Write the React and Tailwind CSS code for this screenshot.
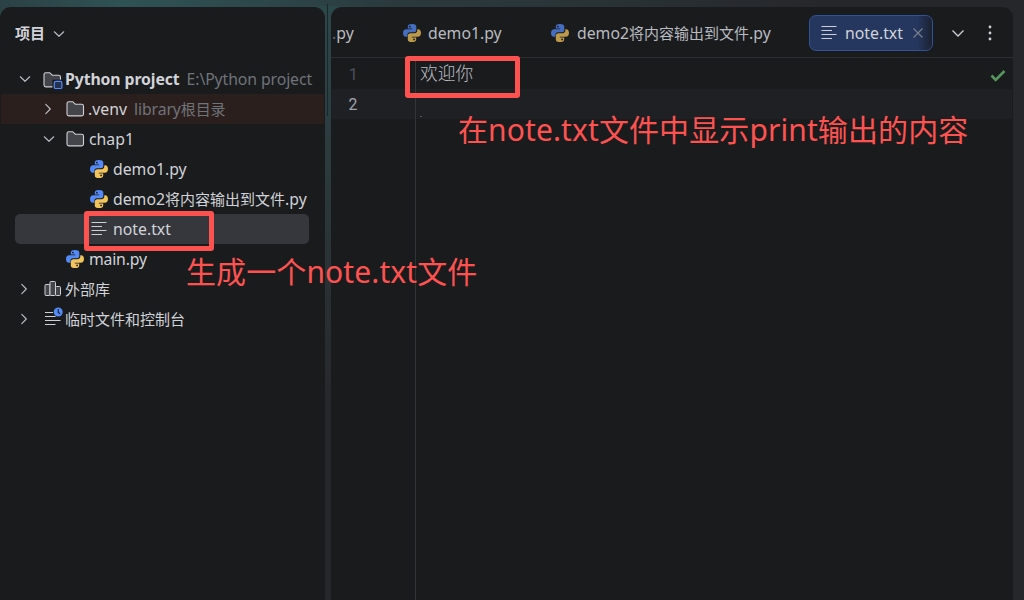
import React from 'react';
import clsx from 'clsx';

const PythonIcon = ({ className = '' }) => (
    <svg viewBox="0 0 18 18" className={clsx('h-[18px] w-[18px] shrink-0', className)}>
        <path
            fill="#548af7"
            d="M9 0C6.4 0 4.8.7 4.8 2.6V4.500H9.200V5.300H3.200C1.200 5.300 0 6.700 0 9c0 2.300 1.100 3.800 2.900 3.800H4.400V10.800C4.400 9.200 5.500 8.200 7 8.200h4C12.400 8.200 13.300 7.200 13.300 5.900V2.600C13.300.8 11.500 0 9 0ZM6.900 1.700a.9.9 0 1 1 0 1.800.9.9 0 0 1 0-1.800Z"
        />
        <path
            fill="#f2c55c"
            d="M9 18c2.600 0 4.200-.7 4.200-2.600V13.500H8.800V12.700H14.800C16.800 12.700 18 11.300 18 9c0-2.300-1.100-3.800-2.900-3.800H14.300V6.500C14.300 8.200 13 9.300 11.400 9.300H7.400C5.900 9.300 4.800 10.300 4.800 11.700V15.400C4.800 17.200 6.500 18 9 18ZM11.100 16.300a.9.9 0 1 1 0-1.800.9.9 0 0 1 0 1.800Z"
        />
    </svg>
);

const TextIcon = ({ className = '' }) => (
    <svg viewBox="0 0 18 18" className={clsx('h-[18px] w-[18px] shrink-0', className)}>
        <path fill="none" stroke="#ced0d6" strokeWidth="1.1" d="M1.500 2.500h15M1.500 6.500h10.500M1.500 10.500h15M1.500 14.500h10.500" />
    </svg>
);

const FolderIcon = ({ module = false }) => (
    <svg viewBox="0 0 20 18" className="h-[18px] w-[20px] shrink-0">
        <path
            d="M1 3.500C1 2.400 1.700 1.700 2.800 1.700H6.700L9.300 4.200H15.600C16.800 4.200 17.500 4.900 17.500 6.100V14C17.500 15.200 16.800 15.900 15.600 15.900H2.900C1.700 15.900 1 15.200 1 14Z"
            fill="#43454a"
            stroke="#ced0d6"
            strokeWidth="1.100"
        />
        {module && (
            <>
                <rect x="9.500" y="8.700" width="10.500" height="9.300" fill="#1a1b1d" />
                <rect x="11.300" y="10.300" width="7.600" height="7.400" rx="1.800" fill="#25324d" stroke="#548af7" strokeWidth="1.200" />
            </>
        )}
    </svg>
);

const LibraryIcon = () => (
    <svg viewBox="0 0 18 18" className="h-[18px] w-[18px] shrink-0">
        <g fill="#43454a" stroke="#ced0d6" strokeWidth="1">
            <rect x="1" y="4.500" width="5" height="11" rx="1" />
            <rect x="6" y="1.500" width="5.500" height="14" rx="1" />
            <rect x="11.500" y="6.500" width="5" height="9" rx="1" />
        </g>
    </svg>
);

const ScratchIcon = () => (
    <svg viewBox="0 0 20 20" className="h-5 w-5 shrink-0">
        <path fill="none" stroke="#ced0d6" strokeWidth="1.100" d="M1 5.500h8M1 9.500h10.500M1 13.500h15.500M1 17.500h10.500" />
        <circle cx="14.200" cy="5" r="4.500" fill="#548af7" />
        <path fill="none" stroke="#1a1b1d" strokeWidth="1.100" d="M14.200 2v3.200l1.900 1.600" />
    </svg>
);

const Chevron = ({ open = false, className = '' }) => (
    <svg viewBox="0 0 12 12" className={clsx('h-3 w-3 shrink-0', className)}>
        <path fill="none" stroke="#b4b8bf" strokeWidth="1.200" strokeLinecap="round" strokeLinejoin="round" d={open ? 'M1.300 3.800 6 8.300l4.700-4.500' : 'M3.800 1.300 8.300 6l-4.500 4.700'} />
    </svg>
);

// CJK glyphs sit slightly smaller than the latin ones
const Cjk = ({ children }) => <span className="text-[15px]">{children}</span>;

const TreeRow = ({ className = '', children }) => (
    <div className={clsx('flex h-[30px] items-center whitespace-nowrap', className)}>{children}</div>
);

const Label = ({ className = '', children }) => <span className={clsx('pt-[2px]', className)}>{children}</span>;

function ProjectPanel() {
    return (
        <aside className="w-[325px] shrink-0 rounded-t-[11px] bg-[#1a1b1d] text-[15.8px] text-[#d1d3d9]">
            <div className="flex h-[57px] items-center pb-1 pl-[15px]">
                <span className="text-[15px] font-bold">项目</span>
                <Chevron open className="ml-2" />
            </div>

            <TreeRow className="pl-[19px]">
                <Chevron open />
                <span className="ml-3 flex pt-px"><FolderIcon module /></span>
                <Label className="ml-[2px] font-bold tracking-[-0.1px]">Python project</Label>
                <Label className="ml-[7px] tracking-[-0.1px] text-[#6f737a]">E:\Python project</Label>
            </TreeRow>
            <TreeRow className="mx-px bg-[#2b1f1d] pl-[41px]">
                <Chevron />
                <span className="ml-3 flex"><FolderIcon /></span>
                <Label className="ml-[2px]">.venv</Label>
                <Label className="ml-[7px] tracking-[-0.1px] text-[#6f737a]">library<Cjk>根目录</Cjk></Label>
            </TreeRow>
            <TreeRow className="pl-[43px]">
                <Chevron open />
                <span className="ml-[11px] flex"><FolderIcon /></span>
                <Label className="ml-[3px]">chap1</Label>
            </TreeRow>
            <TreeRow className="pl-[90px]">
                <PythonIcon />
                <Label className="ml-[5px]">demo1.py</Label>
            </TreeRow>
            <TreeRow className="pl-[90px]">
                <PythonIcon />
                <Label className="ml-[5px]">demo2<Cjk>将内容输出到文件</Cjk>.py</Label>
            </TreeRow>
            <TreeRow className="ml-[15px] mr-4 rounded-[5px] bg-[#36373d] pl-[75px]">
                <TextIcon />
                <Label className="ml-[5px]">note.txt</Label>
            </TreeRow>
            <TreeRow className="pl-[66px]">
                <PythonIcon />
                <Label className="ml-[5px] tracking-[-0.2px]">main.py</Label>
            </TreeRow>
            <TreeRow className="pl-[18px]">
                <Chevron />
                <span className="ml-[14px] flex"><LibraryIcon /></span>
                <span className="ml-[3px] text-[15px]">外部库</span>
            </TreeRow>
            <TreeRow className="pl-[18px]">
                <Chevron />
                <span className="ml-[14px] flex pb-1"><ScratchIcon /></span>
                <span className="ml-px text-[15px]">临时文件和控制台</span>
            </TreeRow>
        </aside>
    );
}

function Tabs() {
    return (
        <div className="flex h-[51px] items-center overflow-hidden whitespace-nowrap border-b border-[#2b2d31] pt-[2px] text-[15.8px] text-[#b9bbc1]">
            <span className="w-[72px] pl-px pt-[2px]"><span className="text-[#65676b]">.</span>py</span>
            <div className="flex w-[148px] items-center">
                <PythonIcon className="opacity-75" />
                <Label className="ml-[7px]">demo1.py</Label>
            </div>
            <div className="flex w-[258px] items-center">
                <PythonIcon className="opacity-75" />
                <Label className="ml-2">demo2<Cjk>将内容输出到文件</Cjk>.py</Label>
            </div>
            <div className="flex h-[36px] w-[124px] items-center rounded-[7px] border border-[#315296] bg-gradient-to-r from-[#25375f] from-88% to-[#1b2130] pl-[10px] text-[#d1d3d9]">
                <TextIcon />
                <Label className="ml-[7px]">note.txt</Label>
                <svg viewBox="0 0 10 10" className="ml-[10px] h-[10px] w-[10px]">
                    <path stroke="#7b808b" strokeWidth="1.100" d="m.5.5 9 9m0-9-9 9" />
                </svg>
            </div>
            <svg viewBox="0 0 14 14" className="ml-[18px] h-[14px] w-[14px]">
                <path fill="none" stroke="#ced0d6" strokeWidth="1.300" d="m1.500 4.500 5.500 5.500 5.500-5.500" />
            </svg>
            <svg viewBox="0 0 4 18" className="ml-[23px] h-[18px] w-1" fill="#ced0d6">
                <circle cx="2" cy="3" r="1.400" />
                <circle cx="2" cy="9" r="1.400" />
                <circle cx="2" cy="15" r="1.400" />
            </svg>
        </div>
    );
}

function Editor() {
    return (
        <main className="flex w-[682px] shrink-0 flex-col rounded-t-[11px] bg-[#1a1b1d]">
            <Tabs />
            <div className="relative flex-1">
                <div className="flex h-[31px] items-center">
                    <span className="w-[27px] text-right font-['Roboto_Mono','DejaVu_Sans_Mono',monospace] text-[16px] text-[#4b5059]">1</span>
                    <span className="ml-[62px] pb-[2px] font-['Noto_Sans_CJK_SC',sans-serif] text-[17.7px] font-light text-[#bcbec4]">欢迎你</span>
                    <svg viewBox="0 0 16 12" className="ml-auto mr-[7px] mt-[4px] h-3 w-4">
                        <path fill="none" stroke="#57965c" strokeWidth="2.600" d="m1.500 5.500 4.200 4.300L14.500 1" />
                    </svg>
                </div>
                <div className="mr-px flex h-[30px] items-center bg-[#1f2024]">
                    <span className="w-[27px] text-right font-['Roboto_Mono','DejaVu_Sans_Mono',monospace] text-[16px] text-[#a1a3ab]">2</span>
                </div>
                <div className="absolute inset-y-0 left-[84px] w-px bg-[#313438]" />
                <div className="absolute left-[89px] top-[58px] h-px w-[2px] bg-[#55575b]" />
            </div>
        </main>
    );
}

export default function App() {
    return (
        <div className="relative h-[600px] w-[1024px] overflow-hidden bg-[#26272b] font-['Noto_Sans','Noto_Sans_CJK_SC',sans-serif]">
            {/* Window backdrop tint */}
            <div className="absolute left-0 top-0 h-[7px] w-full bg-gradient-to-r from-[#2b4146] via-[#2a373a] via-50% to-[#26272b] to-80%" />
            <div className="absolute left-0 top-0 h-[7px] w-[400px] bg-gradient-to-r from-transparent via-[#2f5254] via-30% to-transparent" />
            <div className="absolute left-[310px] top-[6px] h-[400px] w-9 bg-gradient-to-b from-[#2c474a] to-[#26272b]" />
            <div className="absolute left-0 top-[6px] h-3 w-3 bg-[#2c4144]" />

            <div className="relative flex h-full gap-[6px] pt-[7px]">
                <ProjectPanel />
                <Editor />
            </div>
            <div className="absolute left-[327px] top-1 h-28 w-px bg-[#1c272b]" />

            {/* Annotations */}
            <div className="absolute left-[84px] top-[211px] h-[40px] w-[130px] rounded-[3px] border-[5px] border-[#fe5251]" />
            <div className="absolute left-[405px] top-[56px] h-[42px] w-[115px] rounded-[3px] border-[5px] border-[#fe5251]" />
            <p className="absolute left-[186px] top-[251px] whitespace-nowrap text-[30px] leading-[42px] tracking-[0.1px] text-[#fe5251]">生成一个note.txt文件</p>
            <p className="absolute left-[458px] top-[109px] whitespace-nowrap text-[30px] leading-[42px] tracking-[0.1px] text-[#fe5251]">在note.txt文件中显示print输出的内容</p>
        </div>
    );
}
